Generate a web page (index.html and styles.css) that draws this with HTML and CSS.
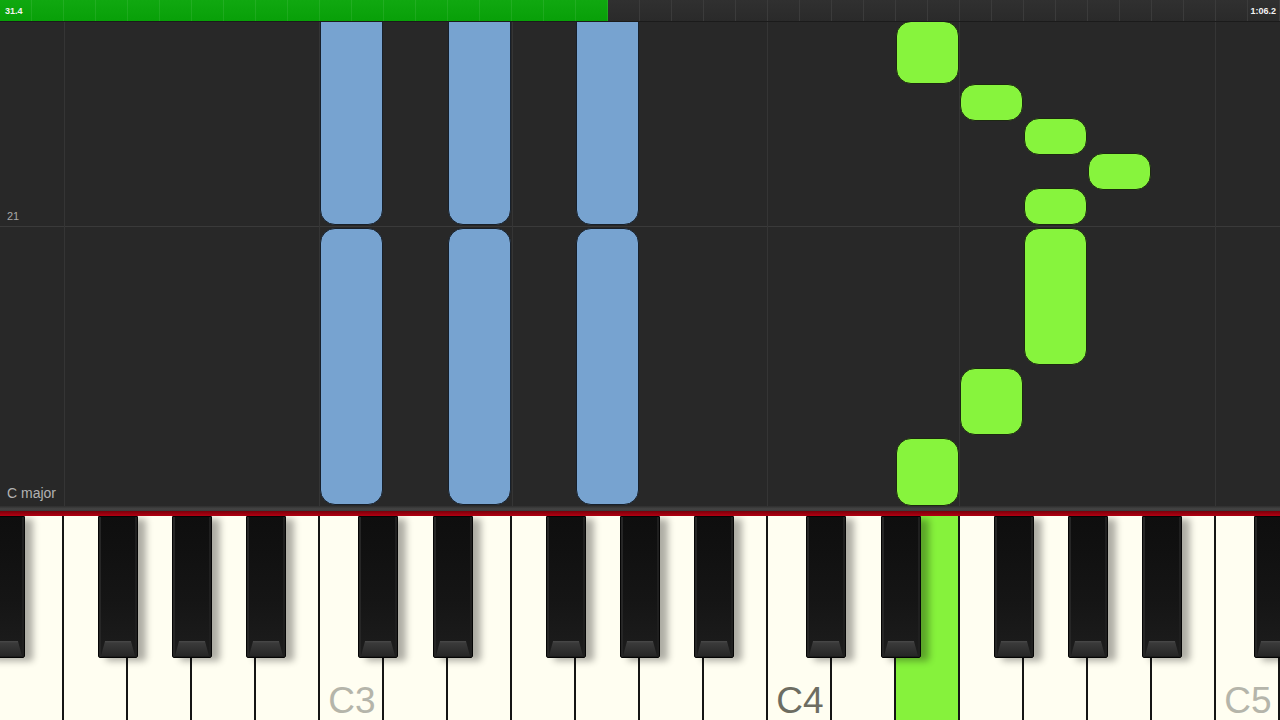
FILE: index.html
```html
<!DOCTYPE html>
<html lang="en">
<head>
<meta charset="utf-8">
<title>Piano roll</title>
<link rel="stylesheet" href="styles.css">
</head>
<body>
<div class="app">
  <header class="topbar">
    <div class="progress"></div>
    <div class="rest"></div>
    <span class="time time-left">31.4</span>
    <span class="time time-right">1:06.2</span>
  </header>

  <main class="roll">
    <div class="hline" style="top:204px"></div>
    <div class="vline" style="left:64px"></div>
    <div class="vline" style="left:319px"></div>
    <div class="vline" style="left:512px"></div>
    <div class="vline" style="left:767px"></div>
    <div class="vline" style="left:959px"></div>
    <div class="vline" style="left:1215px"></div>

    <span class="measure">21</span>
    <span class="keysig">C major</span>

    <div class="note blue" style="left:320px;top:-20px;height:223px"></div>
    <div class="note blue" style="left:448px;top:-20px;height:223px"></div>
    <div class="note blue" style="left:576px;top:-20px;height:223px"></div>
    <div class="note blue" style="left:320px;top:206px;height:277px"></div>
    <div class="note blue" style="left:448px;top:206px;height:277px"></div>
    <div class="note blue" style="left:576px;top:206px;height:277px"></div>

    <div class="note green" style="left:896px;top:-1px;height:63px"></div>
    <div class="note green" style="left:960px;top:62px;height:37px"></div>
    <div class="note green" style="left:1024px;top:96px;height:37px"></div>
    <div class="note green" style="left:1088px;top:131px;height:37px"></div>
    <div class="note green" style="left:1024px;top:166px;height:37px"></div>
    <div class="note green" style="left:1024px;top:206px;height:137px"></div>
    <div class="note green" style="left:960px;top:346px;height:67px"></div>
    <div class="note green" style="left:896px;top:416px;height:68px"></div>
  </main>

  <section class="keyboard">
    <div class="rail"></div>
    <div class="felt"></div>
    <div class="keys">
      <div class="white-keys">
        <div class="wk"></div>
        <div class="wk"></div>
        <div class="wk"></div>
        <div class="wk"></div>
        <div class="wk"></div>
        <div class="wk"><span class="label">C3</span></div>
        <div class="wk"></div>
        <div class="wk"></div>
        <div class="wk"></div>
        <div class="wk"></div>
        <div class="wk"></div>
        <div class="wk"></div>
        <div class="wk"><span class="label label-dark">C4</span></div>
        <div class="wk"></div>
        <div class="wk pressed"></div>
        <div class="wk"></div>
        <div class="wk"></div>
        <div class="wk"></div>
        <div class="wk"></div>
        <div class="wk"><span class="label">C5</span></div>
      </div>
      <div class="bk" style="left:-15px"></div>
      <div class="bk" style="left:98px"></div>
      <div class="bk" style="left:172px"></div>
      <div class="bk" style="left:246px"></div>
      <div class="bk" style="left:358px"></div>
      <div class="bk" style="left:433px"></div>
      <div class="bk" style="left:546px"></div>
      <div class="bk" style="left:620px"></div>
      <div class="bk" style="left:694px"></div>
      <div class="bk" style="left:806px"></div>
      <div class="bk" style="left:881px"></div>
      <div class="bk" style="left:994px"></div>
      <div class="bk" style="left:1068px"></div>
      <div class="bk" style="left:1142px"></div>
      <div class="bk" style="left:1254px"></div>
    </div>
  </section>
</div>
</body>
</html>
```

FILE: styles.css
```css
* { box-sizing: border-box; }

html, body {
  margin: 0;
  padding: 0;
  width: 1280px;
  height: 720px;
  overflow: hidden;
  background: #282828;
  font-family: "Liberation Sans", Arial, sans-serif;
}

.app {
  display: flex;
  flex-direction: column;
  width: 1280px;
  height: 720px;
}

/* ---------- top progress bar ---------- */
.topbar {
  position: relative;
  display: flex;
  height: 22px;
  flex: 0 0 22px;
  border-bottom: 1px solid #1b1b1b;
}

.progress {
  width: 608px;
  background:
    repeating-linear-gradient(to right, transparent 0 31px, rgba(255,255,255,0.08) 31px 32px),
    linear-gradient(#10a810, #08a008);
}

.rest {
  flex: 1;
  background:
    repeating-linear-gradient(to right, transparent 0 31px, #3b3b3b 31px 32px),
    linear-gradient(#303030, #2a2a2a);
}

.time {
  position: absolute;
  top: 6px;
  font-size: 9px;
  font-weight: bold;
  line-height: 10px;
  color: #f2f2f2;
}
.time-left { left: 5px; }
.time-right { right: 4px; }

/* ---------- piano roll ---------- */
.roll {
  position: relative;
  height: 484px;
  flex: 0 0 484px;
  overflow: hidden;
  background: #282828;
}

.hline {
  position: absolute;
  left: 0;
  right: 0;
  height: 1px;
  background: #3a3a3a;
}

.vline {
  position: absolute;
  top: 0;
  bottom: 0;
  width: 1px;
  background: #353535;
}

.measure {
  position: absolute;
  left: 7px;
  top: 188px;
  font-size: 11px;
  line-height: 12px;
  color: #a8a8a8;
}

.keysig {
  position: absolute;
  left: 7px;
  top: 463px;
  font-size: 14px;
  line-height: 16px;
  color: #b2b2b2;
}

.note {
  position: absolute;
  width: 63px;
  border-radius: 15px;
  border: 1px solid #141a12;
}

.note.blue {
  background: #77a3d0;
  border-color: #17202b;
}

.note.green {
  background: #87f43d;
  border-color: #1c2a10;
}

/* ---------- keyboard ---------- */
.keyboard {
  display: flex;
  flex-direction: column;
  flex: 1;
}

.rail {
  height: 5px;
  background: linear-gradient(#2e2e2e, #444 60%, #3a3a3a);
}

.felt {
  height: 5px;
  background: linear-gradient(#7a000a, #b20012);
}

.keys {
  position: relative;
  flex: 1;
  overflow: hidden;
}

.white-keys {
  display: flex;
  height: 100%;
}

.wk {
  flex: 0 0 64px;
  height: 100%;
  background: #fffef1;
  border-right: 2px solid #151515;
  display: flex;
  align-items: flex-end;
  justify-content: center;
}

.wk.pressed {
  background: #86f23c;
}

.label {
  display: block;
  font-size: 37px;
  line-height: 30px;
  margin: 0 0 4px 2px;
  color: #b5b5aa;
}

.label-dark {
  color: #6d6d62;
}

.bk {
  position: absolute;
  top: 0;
  width: 40px;
  height: 142px;
  border: 1px solid #050505;
  border-radius: 0 0 2px 2px;
  background: linear-gradient(#0e0e0e, #151515 60%, #1d1d1d);
  box-shadow:
    inset 2px 0 0 #262626,
    inset -2px 0 0 #1f1f1f,
    8px 3px 7px rgba(0, 0, 0, 0.32);
}

.bk::after {
  content: "";
  position: absolute;
  left: 2px;
  right: 2px;
  bottom: 1px;
  height: 15px;
  background: linear-gradient(#4a4a4a 0, #3a3a3a 2px, #262626 100%);
  clip-path: polygon(12% 0, 88% 0, 100% 100%, 0 100%);
}
```
